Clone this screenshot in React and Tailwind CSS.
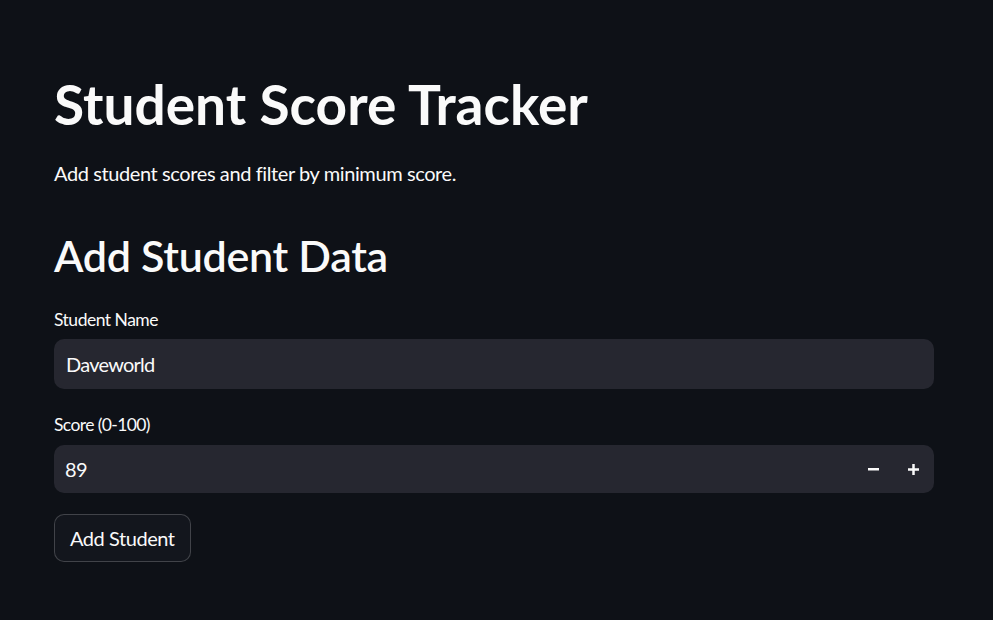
import React from "react";

const font = { fontFamily: "Lato, 'Liberation Sans', sans-serif" };

export default function App() {
  return (
    <div className="min-h-[620px] w-full bg-[#0e1117] text-[#fafafa]" style={font}>
      <div className="ml-[54px] flex w-[880px] flex-col pt-[71px]">
        <h1 className="h-[66px] whitespace-nowrap text-[55px] font-bold leading-[66px]">
          Student Score Tracker
        </h1>
        <p className="mt-[20px] h-[32px] text-[20px] leading-[32px] tracking-[-0.4px]">
          Add student scores and filter by minimum score.
        </p>
        <h2 className="mt-[40px] h-[54px] text-[43px] font-semibold leading-[54px] tracking-[-0.3px]">
          Add Student Data
        </h2>
        <label className="mt-[26px] h-[22px] text-[17.5px] leading-[22px] tracking-[-0.5px]">
          Student Name
        </label>
        <div className="mt-[8px] flex h-[50px] items-center rounded-[10px] bg-[#262730] px-[12px] text-[20px] tracking-[-0.75px]">
          Daveworld
        </div>
        <label className="mt-[25px] h-[22px] text-[17.5px] leading-[22px] tracking-[-0.6px]">
          Score (0-100)
        </label>
        <div className="mt-[9px] flex h-[48px] items-center rounded-[10px] bg-[#262730] pl-[11px] text-[20px]">
          <span className="flex-1 tracking-[-0.5px]">89</span>
          <div className="flex h-full items-center">
            <div className="flex h-full w-[40px] items-center justify-center">
              <svg width="11" height="3" viewBox="0 0 11 3">
                <rect x="0" y="0" width="11" height="2.5" fill="#fafafa" />
              </svg>
            </div>
            <div className="mr-[1px] flex h-full w-[40px] items-center justify-center">
              <svg width="11" height="11" viewBox="0 0 11 11">
                <rect x="0" y="4.25" width="11" height="2.5" fill="#fafafa" />
                <rect x="4.25" y="0" width="2.5" height="11" fill="#fafafa" />
              </svg>
            </div>
          </div>
        </div>
        <div className="mt-[21px]">
          <button className="h-[48px] rounded-[10px] border border-[rgba(250,250,250,0.2)] bg-[#13161d] px-[15px] text-[20px] tracking-[-0.45px]">
            Add Student
          </button>
        </div>
      </div>
    </div>
  );
}
